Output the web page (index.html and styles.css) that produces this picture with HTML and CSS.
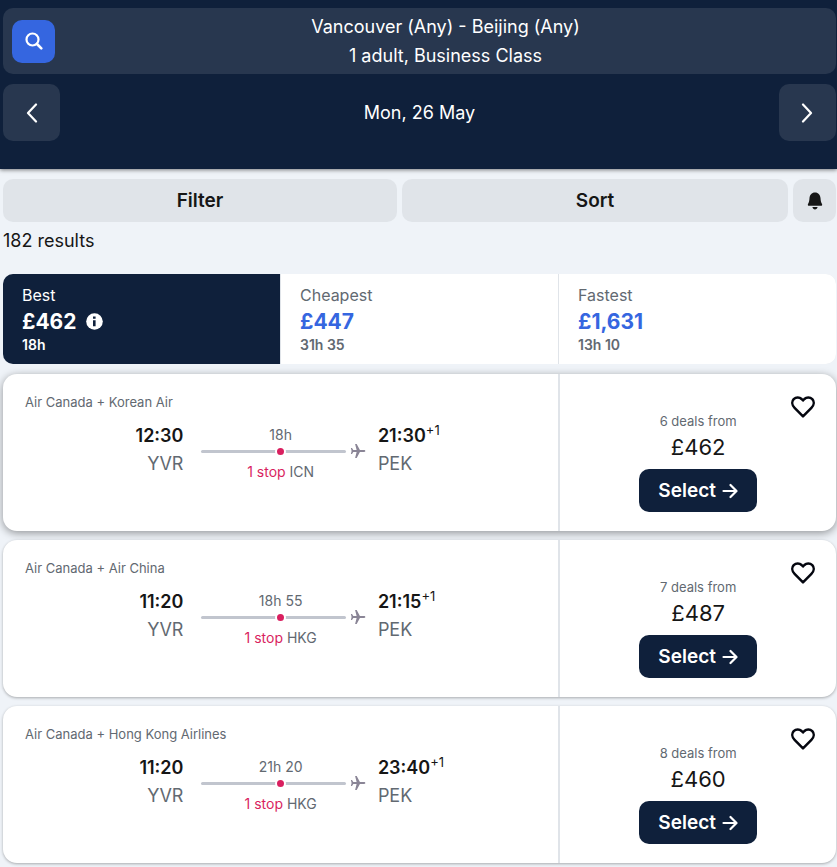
FILE: index.html
```html
<!DOCTYPE html>
<html lang="en">
<head>
  <meta charset="UTF-8">
  <meta name="viewport" content="width=device-width, initial-scale=1">
  <title>Vancouver to Beijing flights</title>
  <link rel="stylesheet" href="styles.css">
</head>
<body>
  <!-- Shared icons -->
  <svg class="sprite" aria-hidden="true">
    <symbol id="icon-heart" viewBox="0 0 24 22">
      <path d="M12 20.3 3.600 11.900C.7 9 .7 5.300 2.700 3.100 5 .8 8.500 .9 10.600 3L12 4.500 13.400 3c2.100-2.100 5.600-2.200 7.900.1 2 2.200 2 5.900-.9 8.800z" fill="none" stroke="currentColor" stroke-width="2.500" stroke-linejoin="round"/>
    </symbol>
    <symbol id="icon-plane" viewBox="0 0 16 16">
      <path d="M15.300 8c0 .6-.5.900-1.100.9H9.900L6.700 15H5.100l1.500-6.100H3.300L2 10.900H.9L1.600 8 .9 5.100H2l1.300 2h3.300L5.100 1h1.600l3.200 6.100h4.300c.6 0 1.100.3 1.100.9z" fill="currentColor"/>
    </symbol>
    <symbol id="icon-arrow" viewBox="0 0 16 16">
      <path d="M1.500 8H14M8.500 2l6 6-6 6" fill="none" stroke="currentColor" stroke-width="2.200" stroke-linecap="round" stroke-linejoin="round"/>
    </symbol>
  </svg>

  <header class="header">
    <div class="search-bar">
      <button class="search-button" aria-label="Edit search">
        <svg width="18" height="18" viewBox="0 0 18 18"><circle cx="7.500" cy="7.500" r="6" fill="none" stroke="#fff" stroke-width="2.200"/><path d="M12 12l4.300 4.300" stroke="#fff" stroke-width="2.600" stroke-linecap="round"/></svg>
      </button>
      <div class="search-summary">
        <div>Vancouver (Any) - Beijing (Any)</div>
        <div>1 adult, Business Class</div>
      </div>
    </div>
    <div class="date-bar">
      <button class="date-button" aria-label="Previous day">
        <svg width="12" height="20" viewBox="0 0 12 20"><path d="M10 1.500L2 10l8 8.500" fill="none" stroke="#fff" stroke-width="2.200" stroke-linecap="round" stroke-linejoin="round"/></svg>
      </button>
      <span>Mon, 26 May</span>
      <button class="date-button" aria-label="Next day">
        <svg width="12" height="20" viewBox="0 0 12 20"><path d="M2 1.500l8 8.500-8 8.500" fill="none" stroke="#fff" stroke-width="2.200" stroke-linecap="round" stroke-linejoin="round"/></svg>
      </button>
    </div>
  </header>

  <main class="content">
    <div class="toolbar">
      <button class="tool-button">Filter</button>
      <button class="tool-button">Sort</button>
      <button class="tool-button tool-alert" aria-label="Price alert">
        <svg width="16" height="18" viewBox="0 0 16 18"><path d="M8 .5c3.400 0 5.300 2.500 5.500 5.500.2 3 .5 4.300 1.500 5.900.5.900 0 1.800-1 1.800H2c-1 0-1.500-.9-1-1.800C2 10.300 2.300 9 2.500 6 2.700 3 4.600.5 8 .5zM5.400 15h5.200c-.3 1.500-1.300 2.500-2.600 2.500S5.700 16.500 5.400 15z" fill="#161616"/></svg>
      </button>
    </div>
    <p class="result-count">182 results</p>

    <div class="tabs">
      <button class="tab tab-active">
        <span class="tab-name">Best</span>
        <span class="tab-price">£462
          <svg width="17" height="17" viewBox="0 0 17 17"><circle cx="8.500" cy="8.500" r="8.300" fill="#fff"/><path d="M7 7.200h2.600v6H7zM7 3.600h2.600v2.200H7z" fill="#0f203b"/></svg>
        </span>
        <span class="tab-time">18h</span>
      </button>
      <button class="tab">
        <span class="tab-name">Cheapest</span>
        <span class="tab-price">£447</span>
        <span class="tab-time">31h 35</span>
      </button>
      <button class="tab">
        <span class="tab-name">Fastest</span>
        <span class="tab-price">£1,631</span>
        <span class="tab-time">13h 10</span>
      </button>
    </div>

    <div class="tickets">
      <article class="ticket ticket-raised">
        <div class="flight">
          <div class="airline">Air Canada + Korean Air</div>
          <div class="leg">
            <div class="depart"><div class="time">12:30</div><div class="airport">YVR</div></div>
            <div class="route">
              <div>18h</div>
              <div class="track"><span class="stop-dot"></span><svg class="plane" width="16" height="16"><use href="#icon-plane"/></svg></div>
              <div><span class="stops">1 stop</span> ICN</div>
            </div>
            <div class="arrive"><div class="time">21:30<sup>+1</sup></div><div class="airport">PEK</div></div>
          </div>
        </div>
        <div class="offer">
          <button class="save" aria-label="Save flight"><svg width="24" height="22"><use href="#icon-heart"/></svg></button>
          <div class="deal">
            <div class="deal-count">6 deals from</div>
            <div class="deal-price">£462</div>
            <button class="select">Select <svg width="16" height="16"><use href="#icon-arrow"/></svg></button>
          </div>
        </div>
      </article>

      <article class="ticket">
        <div class="flight">
          <div class="airline">Air Canada + Air China</div>
          <div class="leg">
            <div class="depart"><div class="time">11:20</div><div class="airport">YVR</div></div>
            <div class="route">
              <div>18h 55</div>
              <div class="track"><span class="stop-dot"></span><svg class="plane" width="16" height="16"><use href="#icon-plane"/></svg></div>
              <div><span class="stops">1 stop</span> HKG</div>
            </div>
            <div class="arrive"><div class="time">21:15<sup>+1</sup></div><div class="airport">PEK</div></div>
          </div>
        </div>
        <div class="offer">
          <button class="save" aria-label="Save flight"><svg width="24" height="22"><use href="#icon-heart"/></svg></button>
          <div class="deal">
            <div class="deal-count">7 deals from</div>
            <div class="deal-price">£487</div>
            <button class="select">Select <svg width="16" height="16"><use href="#icon-arrow"/></svg></button>
          </div>
        </div>
      </article>

      <article class="ticket">
        <div class="flight">
          <div class="airline">Air Canada + Hong Kong Airlines</div>
          <div class="leg">
            <div class="depart"><div class="time">11:20</div><div class="airport">YVR</div></div>
            <div class="route">
              <div>21h 20</div>
              <div class="track"><span class="stop-dot"></span><svg class="plane" width="16" height="16"><use href="#icon-plane"/></svg></div>
              <div><span class="stops">1 stop</span> HKG</div>
            </div>
            <div class="arrive"><div class="time">23:40<sup>+1</sup></div><div class="airport">PEK</div></div>
          </div>
        </div>
        <div class="offer">
          <button class="save" aria-label="Save flight"><svg width="24" height="22"><use href="#icon-heart"/></svg></button>
          <div class="deal">
            <div class="deal-count">8 deals from</div>
            <div class="deal-price">£460</div>
            <button class="select">Select <svg width="16" height="16"><use href="#icon-arrow"/></svg></button>
          </div>
        </div>
      </article>
    </div>
  </main>
</body>
</html>
```
FILE: styles.css
```css
* {
  box-sizing: border-box;
}

body {
  margin: 0;
  background: #eff3f8;
  font-family: Inter, "Liberation Sans", Arial, sans-serif;
  font-size: 18px;
  color: #161616;
}

button {
  padding: 0;
  border: none;
  font: inherit;
  color: inherit;
  cursor: pointer;
}

.sprite {
  display: none;
}

/* Header */
.header {
  padding: 8px 1px 28px 3px;
  background: #0f203b;
  color: #fff;
  box-shadow: 0 1px 4px rgba(0, 0, 0, 0.5);
}

.search-bar {
  display: flex;
  align-items: center;
  padding: 4px 0 4px 9px;
  border-radius: 10px;
  background: #28374f;
}

.search-button {
  display: flex;
  align-items: center;
  justify-content: center;
  width: 43px;
  height: 43px;
  border-radius: 10px;
  background: #3566e0;
}

.search-summary {
  flex: 1;
  line-height: 29px;
  text-align: center;
}

.date-bar {
  display: flex;
  align-items: center;
  justify-content: space-between;
  margin-top: 10px;
}

.date-button {
  display: flex;
  align-items: center;
  justify-content: center;
  width: 57px;
  height: 57px;
  border-radius: 10px;
  background: #28374f;
}

/* Filter, sort and alert */
.content {
  padding: 10px 1px 4px 3px;
}

.toolbar {
  display: flex;
  gap: 5px;
}

.tool-button {
  display: flex;
  flex: 1 1 auto;
  align-items: center;
  justify-content: center;
  height: 43px;
  border-radius: 10px;
  background: #e0e4e9;
  font-size: 19px;
  font-weight: 600;
}

.tool-alert {
  flex: 0 0 43px;
}

.result-count {
  margin: 4px 0 19px;
  line-height: 29px;
}

/* Best / cheapest / fastest */
.tabs {
  display: grid;
  grid-template-columns: repeat(3, 1fr);
  gap: 1px;
  overflow: hidden;
  border-radius: 10px;
  background: #e0e4e9;
}

.tab {
  display: flex;
  flex-direction: column;
  padding: 9px 19px 10px;
  background: #fff;
  color: #626971;
  text-align: left;
}

.tab-active {
  background: #0f203b;
  color: #fff;
}

.tab-name {
  font-size: 16px;
  line-height: 24px;
}

.tab-price {
  display: flex;
  align-items: center;
  gap: 10px;
  font-size: 21px;
  font-weight: 700;
  line-height: 29px;
  color: #3566e0;
}

.tab-active .tab-price {
  color: #fff;
}

.tab-time {
  font-size: 14px;
  font-weight: 600;
  line-height: 18px;
}

/* Tickets */
.tickets {
  display: grid;
  gap: 9px;
  margin-top: 10px;
}

.ticket {
  display: grid;
  grid-template-columns: 2fr 1fr;
  border-radius: 14px;
  background: #fff;
  box-shadow: 0 1px 3px rgba(0, 0, 0, 0.3);
}

.ticket-raised {
  box-shadow: 0 2px 8px rgba(0, 0, 0, 0.4);
}

.flight {
  padding: 19px 22px 0;
}

.airline {
  font-size: 13px;
  line-height: 18px;
  color: #626971;
}

.leg {
  display: grid;
  grid-template-columns: repeat(3, 1fr);
  gap: 18px;
  margin-top: 10px;
}

.depart {
  text-align: right;
}

.time {
  font-weight: 600;
  line-height: 29px;
}

.time sup {
  font-size: 13px;
  font-weight: 400;
  line-height: 0;
}

.airport {
  line-height: 28px;
  color: #626971;
}

.route {
  padding-top: 5px;
  font-size: 14px;
  line-height: 18px;
  text-align: center;
  color: #626971;
}

.track {
  position: relative;
  height: 3px;
  margin: 6px 14px 10px 0;
  border-radius: 2px;
  background: #c1c5ce;
}

.stop-dot {
  position: absolute;
  top: -4px;
  left: 74px;
  width: 11px;
  height: 11px;
  border: 2px solid #fff;
  border-radius: 50%;
  background: #d91f5f;
}

.plane {
  position: absolute;
  top: -7px;
  right: -20px;
  color: #8a8596;
}

.stops {
  color: #d91f5f;
}

.offer {
  display: grid;
  border-left: 2px solid #e0e4e9;
}

/* The heart shares its cell with the deal */
.save,
.deal {
  grid-area: 1 / 1;
}

.save {
  display: flex;
  place-self: start end;
  margin: 22px 21px 0 0;
  background: none;
  color: #04060f;
}

.deal {
  display: flex;
  flex-direction: column;
  align-items: center;
  padding: 38px 0 19px;
}

.deal-count {
  font-size: 13px;
  line-height: 18px;
  color: #626971;
}

.deal-price {
  margin: 3px 0 7px;
  font-size: 22px;
  line-height: 29px;
}

.select {
  display: flex;
  align-items: center;
  gap: 6px;
  height: 43px;
  padding: 0 19px;
  border-radius: 10px;
  background: #0f203b;
  font-size: 19px;
  font-weight: 600;
  color: #fff;
}
```
